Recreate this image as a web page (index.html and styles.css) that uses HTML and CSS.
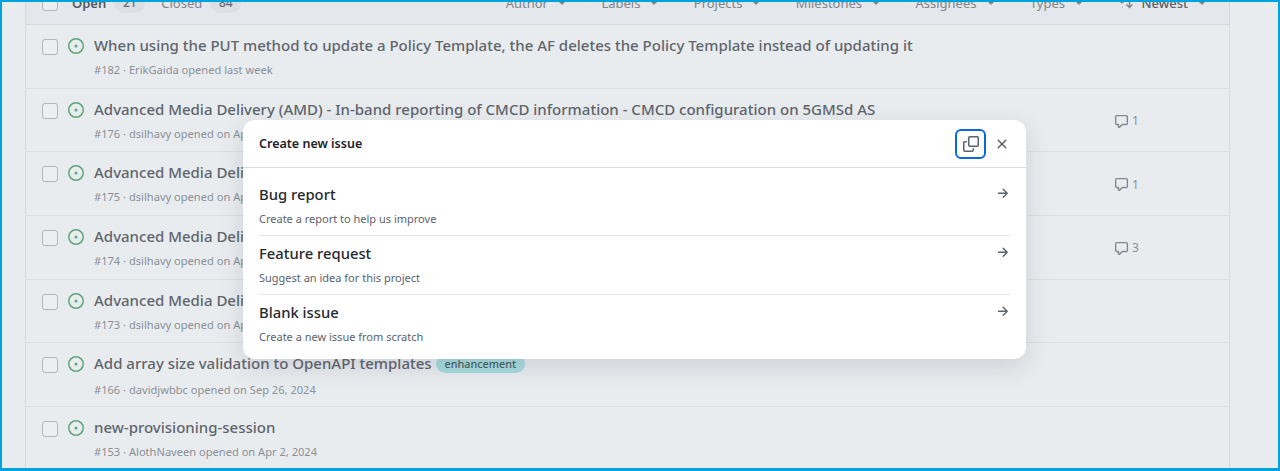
FILE: index.html
```html
<!DOCTYPE html>
<html lang="en">
<head>
<meta charset="utf-8">
<title>Issues</title>
<link rel="stylesheet" href="styles.css">
</head>
<body>
<svg class="sprite" width="0" height="0" aria-hidden="true">
  <symbol id="i-open" viewBox="0 0 16 16"><path d="M8 9.500a1.500 1.500 0 1 0 0-3 1.500 1.500 0 0 0 0 3Z"/><path d="M8 0a8 8 0 1 1 0 16A8 8 0 0 1 8 0ZM1.500 8a6.500 6.500 0 1 0 13 0 6.500 6.500 0 0 0-13 0Z"/></symbol>
  <symbol id="i-comment" viewBox="0 0 16 16"><path d="M1 2.750C1 1.784 1.784 1 2.750 1h10.500c.966 0 1.750.784 1.750 1.750v7.500A1.750 1.750 0 0 1 13.250 12H9.060l-2.573 2.573A1.458 1.458 0 0 1 4 13.543V12H2.750A1.750 1.750 0 0 1 1 10.250Zm1.750-.25a.25.25 0 0 0-.25.25v7.500c0 .138.112.25.25.25h2a.75.75 0 0 1 .75.75v2.190l2.720-2.720a.749.749 0 0 1 .53-.22h4.500a.25.25 0 0 0 .25-.25v-7.500a.25.25 0 0 0-.25-.25Z"/></symbol>
  <symbol id="i-arrow" viewBox="0 0 16 16"><path d="M8.220 2.970a.75.75 0 0 1 1.060 0l4.250 4.250a.75.75 0 0 1 0 1.060l-4.250 4.250a.751.751 0 0 1-1.042-.018.751.751 0 0 1-.018-1.042l2.970-2.970H3.750a.75.75 0 0 1 0-1.500h7.440L8.220 4.030a.75.75 0 0 1 0-1.060Z"/></symbol>
</svg>
<div class="frame">
  <main class="panel">
    <header class="toolbar">
      <span class="box"></span>
      <span class="tab tab-on">Open</span><span class="pill">21</span>
      <span class="tab tab-off">Closed</span><span class="pill">84</span>
      <nav class="filters">
        <span class="filter">Author<i class="caret"></i></span>
        <span class="filter">Labels<i class="caret"></i></span>
        <span class="filter">Projects<i class="caret"></i></span>
        <span class="filter">Milestones<i class="caret"></i></span>
        <span class="filter">Assignees<i class="caret"></i></span>
        <span class="filter">Types<i class="caret"></i></span>
        <span class="filter sort">
          <svg class="sort-icon" viewBox="0 0 16 16" width="16" height="16"><path d="M1 3h6M2.500 7.500h3M4 12h.5" stroke="currentColor" stroke-width="1.500" fill="none"/><path d="M11.500 3v9M8.500 9.500l3 3 3-3" stroke="currentColor" stroke-width="1.500" fill="none"/></svg>
          Newest<i class="caret"></i></span>
      </nav>
    </header>
    <ul class="rows">
      <li class="row"><span class="box"></span><svg class="open"><use href="#i-open"/></svg>
        <div class="body"><div class="title">When using the PUT method to update a Policy Template, the AF deletes the Policy Template instead of updating it</div><div class="meta">#182 · ErikGaida opened last week</div></div></li>
      <li class="row"><span class="box"></span><svg class="open"><use href="#i-open"/></svg>
        <div class="body"><div class="title">Advanced Media Delivery (AMD) - In-band reporting of CMCD information - CMCD configuration on 5GMSd AS</div><div class="meta">#176 · dsilhavy opened on Apr 2, 2025</div></div>
        <span class="comments"><svg><use href="#i-comment"/></svg>1</span></li>
      <li class="row"><span class="box"></span><svg class="open"><use href="#i-open"/></svg>
        <div class="body"><div class="title">Advanced Media Delivery (AMD) - In-band reporting of CMCD information</div><div class="meta">#175 · dsilhavy opened on Apr 2, 2025</div></div>
        <span class="comments"><svg><use href="#i-comment"/></svg>1</span></li>
      <li class="row"><span class="box"></span><svg class="open"><use href="#i-open"/></svg>
        <div class="body"><div class="title">Advanced Media Delivery (AMD) - Metrics reporting</div><div class="meta">#174 · dsilhavy opened on Apr 2, 2025</div></div>
        <span class="comments"><svg><use href="#i-comment"/></svg>3</span></li>
      <li class="row"><span class="box"></span><svg class="open"><use href="#i-open"/></svg>
        <div class="body"><div class="title">Advanced Media Delivery (AMD) - Consumption reporting</div><div class="meta">#173 · dsilhavy opened on Apr 2, 2025</div></div></li>
      <li class="row"><span class="box"></span><svg class="open"><use href="#i-open"/></svg>
        <div class="body"><div class="title">Add array size validation to OpenAPI templates <span class="label">enhancement</span></div><div class="meta">#166 · davidjwbbc opened on Sep 26, 2024</div></div></li>
      <li class="row"><span class="box"></span><svg class="open"><use href="#i-open"/></svg>
        <div class="body"><div class="title">new-provisioning-session</div><div class="meta">#153 · AlothNaveen opened on Apr 2, 2024</div></div></li>
    </ul>
  </main>
  <section class="dialog" aria-label="Create new issue">
    <header class="dialog-head">
      <h2>Create new issue</h2>
      <button class="icon-btn focused" aria-label="Copy"><svg viewBox="0 0 16 16" width="16" height="16"><path d="M0 6.750C0 5.784.784 5 1.750 5h1.500a.75.75 0 0 1 0 1.500h-1.500a.25.25 0 0 0-.25.25v7.500c0 .138.112.25.25.25h7.500a.25.25 0 0 0 .25-.25v-1.500a.75.75 0 0 1 1.500 0v1.500A1.750 1.750 0 0 1 9.250 16h-7.500A1.750 1.750 0 0 1 0 14.250Z"/><path d="M5 1.750C5 .784 5.784 0 6.750 0h7.500C15.216 0 16 .784 16 1.750v7.500A1.750 1.750 0 0 1 14.250 11h-7.500A1.750 1.750 0 0 1 5 9.250Zm1.750-.25a.25.25 0 0 0-.25.25v7.500c0 .138.112.25.25.25h7.500a.25.25 0 0 0 .25-.25v-7.500a.25.25 0 0 0-.25-.25Z"/></svg></button>
      <button class="icon-btn" aria-label="Close"><svg viewBox="0 0 16 16" width="16" height="16"><path d="M3.720 3.720a.75.75 0 0 1 1.060 0L8 6.940l3.220-3.220a.749.749 0 0 1 1.275.326.749.749 0 0 1-.215.734L9.060 8l3.220 3.220a.749.749 0 0 1-.326 1.275.749.749 0 0 1-.734-.215L8 9.060l-3.220 3.220a.751.751 0 0 1-1.042-.018.751.751 0 0 1-.018-1.042L6.940 8 3.720 4.780a.75.75 0 0 1 0-1.060Z"/></svg></button>
    </header>
    <div class="choices">
      <a class="choice"><div><strong>Bug report</strong><span>Create a report to help us improve</span></div><svg><use href="#i-arrow"/></svg></a>
      <a class="choice"><div><strong>Feature request</strong><span>Suggest an idea for this project</span></div><svg><use href="#i-arrow"/></svg></a>
      <a class="choice"><div><strong>Blank issue</strong><span>Create a new issue from scratch</span></div><svg><use href="#i-arrow"/></svg></a>
    </div>
  </section>
</div>
</body>
</html>
```
FILE: styles.css
```css
* { box-sizing: border-box; }
html, body { margin: 0; height: 100%; overflow: hidden; }
body { font-family: "Noto Sans", "Open Sans", sans-serif; color: #5b6168; }
.sprite { position: absolute; }
.frame {
  position: relative;
  width: 1280px;
  height: 471px;
  overflow: hidden;
  background: #e9ecef;
  border: 2px solid #00a3da;
  border-bottom-width: 3px;
  padding: 0 48px 0 23px;
}
.panel { border-left: 1px solid #d5d8dc; border-right: 1px solid #d5d8dc; height: 100%; }
.toolbar {
  display: flex;
  align-items: center;
  height: 23px;
  padding: 0 16px;
  background: #e4e7eb;
  font-size: 12.500px;
  line-height: 16px;
  border-bottom: 1px solid #d5d8dc;
}
.toolbar > * { transform: translateY(-10px); }
.toolbar > .box { margin-right: 14px; }
.tab-on { font-weight: 600; color: #555b62; font-size: 13px; }
.tab-off { color: #7f858c; margin-left: 16px; font-size: 13px; }
.pill {
  margin-left: 8px;
  width: 31px;
  height: 20px;
  border-radius: 10px;
  background: #dcdfe4;
  font-size: 12px;
  font-weight: 500;
  line-height: 20px;
  text-align: center;
  color: #666c73;
}
.filters { margin-left: auto; display: flex; gap: 35.400px; color: #7f858c; margin-right: 7px; }
.filter { display: flex; align-items: center; gap: 10px; font-size: 13px; }
.sort { color: #5b6168; font-weight: 500; gap: 7px; }
.sort .caret { margin-left: 3px; }
.sort-icon { color: #7f858c; }
.caret {
  width: 0; height: 0;
  border-left: 4px solid transparent;
  border-right: 4px solid transparent;
  border-top: 4px solid #7f858c;
}
.box {
  flex: none;
  width: 16px;
  height: 16px;
  border: 1.500px solid #b2b7bd;
  border-radius: 3px;
  background: #eceff2;
}
.rows { list-style: none; margin: 0; padding: 0; }
.row {
  display: flex;
  position: relative;
  height: 63.670px;
  padding: 13px 16px 0;
  border-bottom: 1px solid #dcdfe3;
}
.row > .box { margin-top: 1px; }
.open { flex: none; width: 16px; height: 16px; margin: 0 10px; fill: #5fa578; }
.body { min-width: 0; flex: 1; }
.title {
  margin-top: -1px;
  font-size: 15px;
  font-weight: 500;
  line-height: 16px;
  color: #5f656c;
  white-space: nowrap;
}
.meta { margin-top: 9px; font-size: 11.100px; line-height: 16px; color: #8a9097; white-space: nowrap; }
.label {
  display: inline-block;
  vertical-align: 1px;
  padding: 0 9px;
  height: 18px;
  border-radius: 9px;
  background: #a8dcdf;
  color: #47605f;
  font-size: 10.800px;
  font-weight: 500;
  line-height: 18px;
}
.comments {
  position: absolute;
  left: 1088px;
  top: 24.400px;
  display: flex;
  align-items: center;
  gap: 3px;
  font-size: 12px;
  line-height: 16px;
  color: #8a9097;
}
.comments svg { width: 15px; height: 15px; fill: #848a91; }
.dialog {
  position: absolute;
  left: 241px;
  top: 118px;
  width: 783px;
  height: 239px;
  border-radius: 12px;
  background: #fff;
  box-shadow: 0 8px 24px rgba(60, 70, 80, 0.16);
  color: #1f2328;
}
.dialog-head {
  display: flex;
  align-items: center;
  height: 48px;
  padding: 0 8px 0 16px;
  border-bottom: 1px solid #d8dee4;
}
.dialog-head h2 { margin: 0 auto 0 0; font-size: 12.500px; font-weight: 600; line-height: 16px; }
.icon-btn {
  display: flex;
  align-items: center;
  justify-content: center;
  width: 32px;
  height: 32px;
  padding: 0;
  border: 0;
  border-radius: 6px;
  background: none;
  fill: #59636e;
}
.focused { width: 31px; height: 30px; border: 2px solid #0969da; }
.choices { padding: 9px 16px 0; }
.choice {
  display: flex;
  justify-content: space-between;
  height: 59px;
  padding-top: 8px;
  border-bottom: 1px solid #e3e6ea;
}
.choice:last-child { border-bottom: 0; }
.choice strong { display: block; font-size: 14.800px; font-weight: 500; line-height: 18px; color: #24292f; }
.choice span { display: block; margin-top: 8px; font-size: 11px; line-height: 16px; color: #59636e; }
.choice svg { flex: none; width: 15px; height: 15px; margin-top: 1px; fill: #59636e; }
```
